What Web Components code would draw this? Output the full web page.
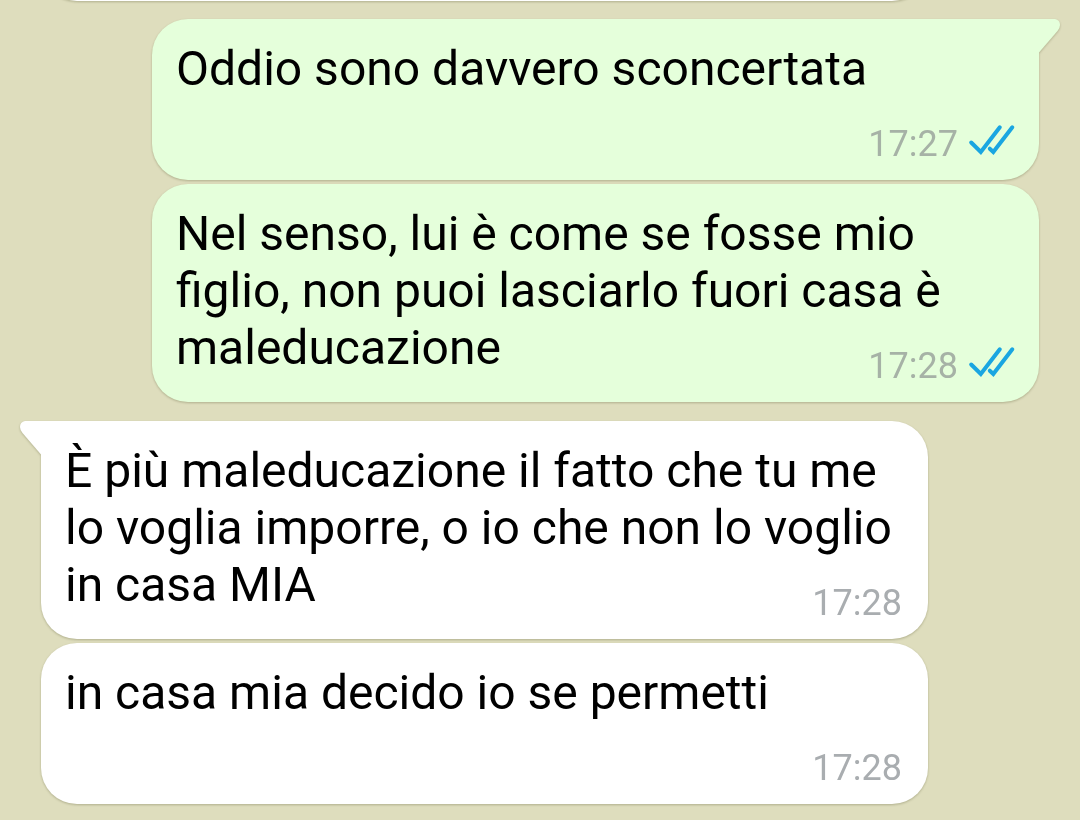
<!DOCTYPE html>
<html lang="it">
<head>
<meta charset="utf-8">
<meta name="viewport" content="width=device-width, initial-scale=1">
<title>Chat</title>
<style>
  body { margin: 0; background: #deddbd; font-family: Roboto, "Liberation Sans", sans-serif; }
</style>
</head>
<body>
<chat-thread>
  <message-group side="in"><chat-message side="in"></chat-message></message-group>
  <message-group side="out">
    <chat-message side="out" time="17:27" read tail>Oddio sono davvero sconcertata</chat-message>
    <chat-message side="out" time="17:28" read>Nel senso, lui è come se fosse mio figlio, non puoi lasciarlo fuori casa è maleducazione</chat-message>
  </message-group>
  <message-group side="in">
    <chat-message side="in" time="17:28" tail>È più maleducazione il fatto che tu me lo voglia imporre, o io che non lo voglio in casa MIA</chat-message>
    <chat-message side="in" time="17:28">in casa mia decido io se permetti</chat-message>
  </message-group>
</chat-thread>
<script>
class ChatThread extends HTMLElement {
  constructor() {
    super();
    // The thread rests at its newest message; older ones run off the top.
    this.attachShadow({ mode: 'open' }).innerHTML = `
      <style>
        :host { display: flex; flex-direction: column; justify-content: flex-end; box-sizing: border-box;
                height: 100vh; padding: 0 41px 16px; overflow: hidden; }
      </style>
      <slot></slot>`;
  }
}

class MessageGroup extends HTMLElement {
  constructor() {
    super();
    this.attachShadow({ mode: 'open' }).innerHTML = `
      <style>
        :host { display: flex; flex-direction: column; flex: none; gap: 4px; align-items: flex-start; }
        :host([side="out"]) { align-items: flex-end; margin: 18px 0 19px; }
      </style>
      <slot></slot>`;
  }
}

class ReadTicks extends HTMLElement {
  constructor() {
    super();
    this.attachShadow({ mode: 'open' }).innerHTML = `
      <style>:host { display: block; } svg { display: block; overflow: visible; }</style>
      <svg width="45" height="32" viewBox="0 0 45 32" fill="none" stroke="#1aa6e1" stroke-width="4" stroke-linecap="round" role="img" aria-label="Letto">
        <path d="M3.2 18.5 12.8 28 31.8 3.3M21.8 24.7 25.3 28 44.3 3.3"/>
      </svg>`;
  }
}

class ChatMessage extends HTMLElement {
  connectedCallback() {
    if (this.shadowRoot) return;
    const time = this.getAttribute('time');
    this.attachShadow({ mode: 'open' }).innerHTML = `
      <style>
        :host { --fill: #fff; --meta: #a9adb0; display: block; position: relative; box-sizing: border-box;
                width: calc(100% - 111px); min-height: 80px; border-radius: 36px; background: var(--fill);
                filter: drop-shadow(0 1px 1px rgba(70, 70, 30, .3)); }
        :host([side="out"]) { --fill: #e5ffdb; --meta: #a6b2a6; }
        :host([tail][side="out"]) { border-top-right-radius: 0; }
        :host([tail][side="in"]) { border-top-left-radius: 0; }
        .body { display: flow-root; padding: 21px 26px 0 24px; font-size: 48px; line-height: 57px; color: #000; }
        .meta { float: right; display: flex; align-items: flex-end; gap: 10px; box-sizing: border-box;
                height: 83px; margin-left: 56px; padding-bottom: 16px; }
        time { font-size: 36px; line-height: 40px; color: var(--meta); }
        read-ticks { margin-bottom: 8px; }
        .tail { position: absolute; top: 0; fill: var(--fill); }
        :host([side="out"]) .tail { left: 100%; }
        :host([side="in"]) .tail { right: 100%; transform: scaleX(-1); }
      </style>
      ${this.hasAttribute('tail') ? '<svg class="tail" width="22" height="34" viewBox="0 0 22 34" aria-hidden="true"><path d="M-1 0H16Q21 1 21 6 21 9 18.5 12L0 33.5H-1Z"/></svg>' : ''}
      ${time ? `<div class="body"><slot></slot><span class="meta"><time>${time}</time>${this.hasAttribute('read') ? '<read-ticks></read-ticks>' : ''}</span></div>` : ''}`;
  }
}

customElements.define('read-ticks', ReadTicks);
customElements.define('chat-message', ChatMessage);
customElements.define('message-group', MessageGroup);
customElements.define('chat-thread', ChatThread);
</script>
</body>
</html>
